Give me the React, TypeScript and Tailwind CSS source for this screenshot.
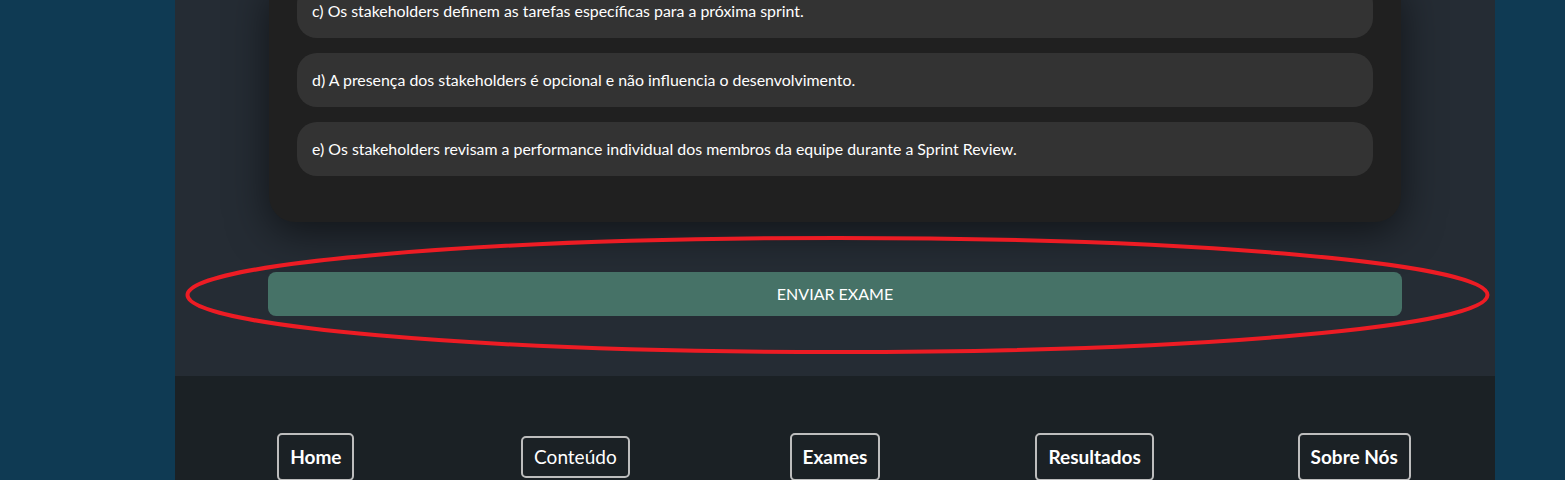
const OPTIONS = [
  'c) Os stakeholders definem as tarefas específicas para a próxima sprint.',
  'd) A presença dos stakeholders é opcional e não influencia o desenvolvimento.',
  'e) Os stakeholders revisam a performance individual dos membros da equipe durante a Sprint Review.',
];

const LINKS = [
  { label: 'Home', bold: true },
  { label: 'Conteúdo', bold: false },
  { label: 'Exames', bold: true },
  { label: 'Resultados', bold: true },
  { label: 'Sobre Nós', bold: true },
];

export default function App() {
  return (
    <div className="relative h-[480px] w-full overflow-hidden bg-[#0f3a53] font-['Lato','Open_Sans',sans-serif]">
      <div className="ml-[175px] w-[1320px]">
        <section className="bg-[#252c34] pb-[60px]">
          <div className="mx-auto -mt-[16px] w-[1132px] rounded-b-[26px] bg-[#202020] px-[28px] pb-[46px] shadow-[0_10px_40px_rgba(0,0,0,0.55)]">
            <div className="flex flex-col gap-[15px]">
              {OPTIONS.map((opt) => (
                <div
                  key={opt}
                  className="flex h-[54px] items-center rounded-[20px] bg-[#333333] px-[15px] text-[15.9px] text-white"
                >
                  {opt}
                </div>
              ))}
            </div>
          </div>

          <div className="mt-[50px] flex justify-center">
            <button className="h-[44px] w-[1134px] rounded-[8px] bg-[#467267] text-[16px] text-white uppercase">
              Enviar Exame
            </button>
          </div>
        </section>

        <footer className="grid grid-cols-5 items-start bg-[#1b2125] px-[11px] pt-[57px] pb-[20px]">
          {LINKS.map((link) => (
            <div key={link.label} className="flex justify-center">
              <a
                className={`rounded-[5px] border-2 border-[#bdbdbd] px-[11px] text-[19px] text-white ${
                  link.bold ? 'font-bold leading-[44px]' : 'mt-[3px] font-normal leading-[38px]'
                }`}
              >
                {link.label}
              </a>
            </div>
          ))}
        </footer>
      </div>

      <svg className="pointer-events-none absolute top-0 left-0" width="1565" height="480">
        <ellipse cx="837.5" cy="295" rx="650" ry="57" fill="none" stroke="#ed1c24" strokeWidth="4" />
      </svg>
    </div>
  );
}
